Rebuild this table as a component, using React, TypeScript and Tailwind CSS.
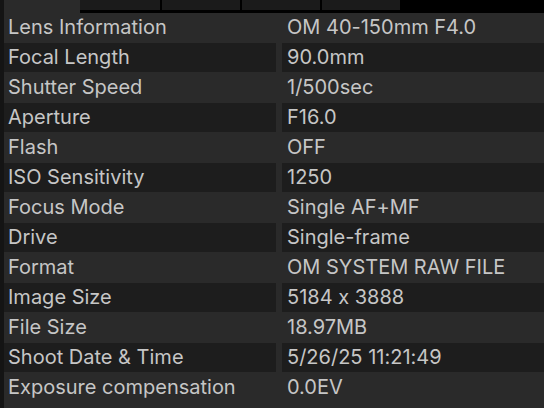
import React from "react";

const rows: [string, string][] = [
  ["Lens Information", "OM 40-150mm F4.0"],
  ["Focal Length", "90.0mm"],
  ["Shutter Speed", "1/500sec"],
  ["Aperture", "F16.0"],
  ["Flash", "OFF"],
  ["ISO Sensitivity", "1250"],
  ["Focus Mode", "Single AF+MF"],
  ["Drive", "Single-frame"],
  ["Format", "OM SYSTEM RAW FILE"],
  ["Image Size", "5184 x 3888"],
  ["File Size", "18.97MB"],
  ["Shoot Date & Time", "5/26/25 11:21:49"],
  ["Exposure compensation", "0.0EV"],
];

const App: React.FunctionComponent<{}> = () => {
  return (
    <div
      className="w-[544px] h-[408px] overflow-hidden flex bg-[#2a2a2a] text-[#c6c6c6] [font-feature-settings:'calt'_0]"
      style={{ fontFamily: "Inter, 'Noto Sans', sans-serif" }}
    >
      <div className="w-[4px] shrink-0 bg-[#141414]" />
      <div className="flex-1 flex flex-col">
        {/* tab strip */}
        <div className="h-[13px] flex">
          <div className="w-[76px]" />
          <div className="flex-1 flex gap-[2px] bg-black pb-[3px]">
            <div className="w-[80px] bg-[#1b1b1b]" />
            <div className="w-[78px] bg-[#1b1b1b]" />
            <div className="w-[78px] bg-[#1b1b1b]" />
            <div className="w-[78px] bg-[#1b1b1b]" />
          </div>
        </div>

        {rows.map(([label, value], i) => {
          const dark = i % 2 === 1;
          return (
            <div key={label} className="h-[30px] flex gap-[6px] text-[20px] leading-[29px]">
              <div className={`w-[272px] h-[29px] pl-[4px] whitespace-nowrap ${dark ? "bg-[#1d1d1d]" : ""}`}>
                {label}
              </div>
              <div className={`flex-1 h-[29px] pl-[5px] whitespace-nowrap ${dark ? "bg-[#1d1d1d]" : ""}`}>
                {value}
              </div>
            </div>
          );
        })}
      </div>
    </div>
  );
};

export default App;
